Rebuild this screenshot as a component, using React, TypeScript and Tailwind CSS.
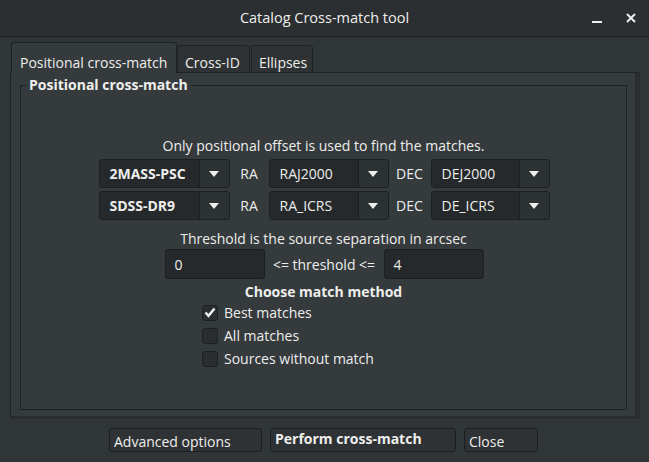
const font = { fontFamily: '"Open Sans", "Noto Sans", sans-serif' };

const Combo = ({ value, bold, width }: { value: string; bold?: boolean; width: string }) => (
  <div className={`${width} h-[29px] flex rounded-[3px] border border-[#1c1f20] overflow-hidden`}>
    <div className={`flex-1 bg-[#25292b] flex items-center pl-[10px] text-[14px] ${bold ? "font-bold" : ""}`}>
      {value}
    </div>
    <div className="w-[30px] bg-[#2c3133] border-l border-[#1c1f20] flex items-center justify-center">
      <svg width="10" height="6" viewBox="0 0 10 6">
        <path d="M0 0 L10 0 L5 6 Z" fill="#eeeeec" />
      </svg>
    </div>
  </div>
);

const Check = ({ label, checked }: { label: string; checked?: boolean }) => (
  <div className="flex items-center gap-[6px] h-[23px]">
    <div className="w-[16px] h-[16px] rounded-[3px] border border-[#1c1f20] bg-[#2a2e30] flex items-center justify-center">
      {checked && (
        <svg width="12" height="11" viewBox="0 0 12 11">
          <path d="M1.5 5.5 L4.5 8.8 L10.5 1.5" stroke="#f2f2f0" strokeWidth="2.4" fill="none" />
        </svg>
      )}
    </div>
    <span className="text-[14px]">{label}</span>
  </div>
);

const App = () => {
  return (
    <div style={font} className="w-[649px] h-[462px] bg-[#303537] text-[#eeeeec] flex flex-col overflow-hidden">
      {/* Title bar */}
      <div className="h-[37px] shrink-0 bg-[#2b2f31] border-b border-[#1b1e1f] flex items-center">
        <div className="w-[80px]" />
        <div className="flex-1 text-center text-[14.5px] font-medium">Catalog Cross-match tool</div>
        <div className="w-[80px] flex items-center justify-end gap-[24px] pr-[13px]">
          <div className="w-[10px] h-[2px] bg-[#eeeeec] mt-[8px]" />
          <svg width="10" height="10" viewBox="0 0 10 10">
            <path d="M1 1 L9 9 M9 1 L1 9" stroke="#eeeeec" strokeWidth="2" />
          </svg>
        </div>
      </div>

      <div className="pl-[10px] pt-[6px] flex flex-col">
        {/* Tabs */}
        <div className="flex items-end h-[30px] -mb-px">
          <div className="ml-[1px] w-[166px] h-[31px] bg-[#353a3c] border border-b-0 border-[#1f2224] rounded-t-[3px] flex items-center pl-[8px] pt-[8px] text-[14px] relative z-10">
            Positional cross-match
          </div>
          <div className="w-[73px] h-[28px] bg-[#2e3234] border border-[#1f2224] rounded-t-[3px] flex items-center pl-[7px] pt-[7px] text-[14px]">
            Cross-ID
          </div>
          <div className="ml-[1px] w-[62px] h-[28px] bg-[#2e3234] border border-[#1f2224] rounded-t-[3px] flex items-center pl-[7px] pt-[7px] text-[14px]">
            Ellipses
          </div>
        </div>

        {/* Notebook page */}
        <div className="w-[630px] h-[347px] bg-[#353a3c] border border-[#1f2224] border-r-[5px] border-b-[3px] border-r-[#292d2f] border-b-[#292d2f] pt-[12px] pl-[9px] pr-[8px] pb-[6px]">
          <div className="relative h-full border border-[#1f2224] flex flex-col items-center">
            <div className="absolute -top-[10px] left-[5px] bg-[#353a3c] px-[3px] text-[14px] font-bold leading-[18px]">
              Positional cross-match
            </div>
            <div className="mt-[51px] text-[14px] leading-[18px]">Only positional offset is used to find the matches.</div>

            <div className="mt-[4px] flex flex-col gap-[3px] ml-[1px]">
              {[
                ["2MASS-PSC", "RAJ2000", "DEJ2000"],
                ["SDSS-DR9", "RA_ICRS", "DE_ICRS"],
              ].map(([cat, ra, dec]) => (
                <div key={cat} className="flex items-center">
                  <Combo value={cat} bold width="w-[131px]" />
                  <span className="w-[39px] text-center text-[14px]">RA</span>
                  <Combo value={ra} width="w-[120px]" />
                  <span className="w-[42px] text-center text-[14px]">DEC</span>
                  <Combo value={dec} width="w-[119px]" />
                </div>
              ))}
            </div>

            <div className="mt-[10px] text-[14px] leading-[18px]">Threshold is the source separation in arcsec</div>
            <div className="mt-[1px] flex items-center ml-[1px]">
              <div className="w-[100px] h-[30px] bg-[#25292b] border border-[#1c1f20] rounded-[3px] flex items-center pl-[9px] text-[14px]">0</div>
              <span className="w-[119px] text-center text-[14px]">&lt;= threshold &lt;=</span>
              <div className="w-[100px] h-[30px] bg-[#25292b] border border-[#1c1f20] rounded-[3px] flex items-center pl-[9px] text-[14px]">4</div>
            </div>

            <div className="mt-[4px] text-[14px] font-bold leading-[18px]">Choose match method</div>
            <div className="self-start ml-[181px] flex flex-col">
              <Check label="Best matches" checked />
              <Check label="All matches" />
              <Check label="Sources without match" />
            </div>
          </div>
        </div>
      </div>

      {/* Buttons */}
      <div className="mt-[9px] flex justify-center gap-[8px] text-[14px] -ml-[2px]">
        <div className="w-[153px] h-[24px] bg-[#2e3234] border border-[#1c1f20] rounded-[3px] flex items-end pl-[4px] leading-[18px]">Advanced options</div>
        <div className="w-[186px] h-[24px] bg-[#2e3234] border border-[#1c1f20] rounded-[3px] flex items-center pl-[4px] pb-[3px] font-bold">Perform cross-match</div>
        <div className="w-[74px] h-[24px] bg-[#2e3234] border border-[#1c1f20] rounded-[3px] flex items-end pl-[4px] leading-[18px]">Close</div>
      </div>
    </div>
  );
};

export default App;
